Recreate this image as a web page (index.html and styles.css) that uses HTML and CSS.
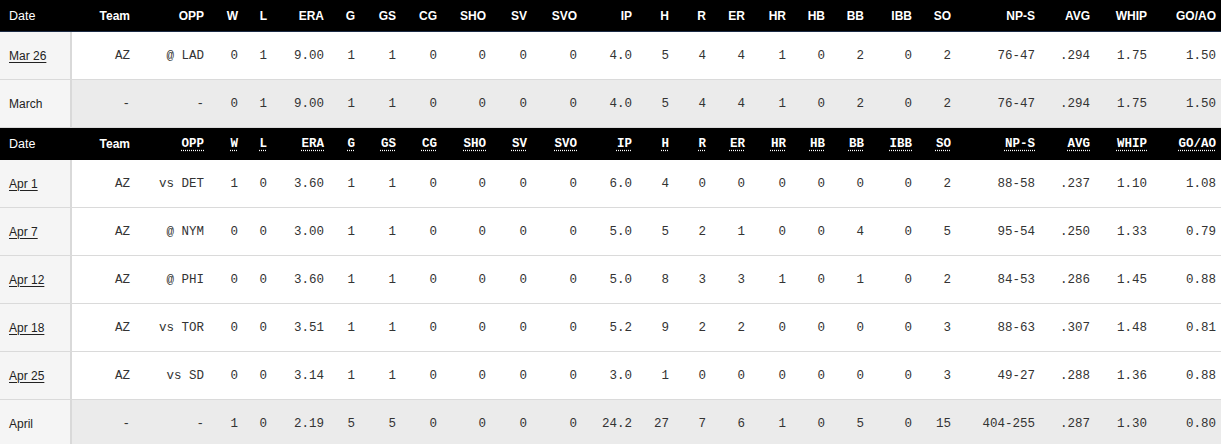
FILE: index.html
```html
<!DOCTYPE html>
<html lang="en">
<head>
<meta charset="utf-8">
<title>Game Log</title>
<link rel="stylesheet" href="styles.css">
</head>
<body>
<div class="log">
  <div class="row head head-first">
    <div class="c date">Date</div><div class="c">Team</div><div class="c">OPP</div><div class="c">W</div><div class="c">L</div><div class="c">ERA</div><div class="c">G</div><div class="c">GS</div><div class="c">CG</div><div class="c">SHO</div><div class="c">SV</div><div class="c">SVO</div><div class="c">IP</div><div class="c">H</div><div class="c">R</div><div class="c">ER</div><div class="c">HR</div><div class="c">HB</div><div class="c">BB</div><div class="c">IBB</div><div class="c">SO</div><div class="c">NP-S</div><div class="c">AVG</div><div class="c">WHIP</div><div class="c">GO/AO</div>
  </div>
  <div class="row">
    <div class="c date"><a href="#">Mar 26</a></div><div class="c">AZ</div><div class="c">@ LAD</div><div class="c">0</div><div class="c">1</div><div class="c">9.00</div><div class="c">1</div><div class="c">1</div><div class="c">0</div><div class="c">0</div><div class="c">0</div><div class="c">0</div><div class="c">4.0</div><div class="c">5</div><div class="c">4</div><div class="c">4</div><div class="c">1</div><div class="c">0</div><div class="c">2</div><div class="c">0</div><div class="c">2</div><div class="c">76-47</div><div class="c">.294</div><div class="c">1.75</div><div class="c">1.50</div>
  </div>
  <div class="row total">
    <div class="c date">March</div><div class="c">-</div><div class="c">-</div><div class="c">0</div><div class="c">1</div><div class="c">9.00</div><div class="c">1</div><div class="c">1</div><div class="c">0</div><div class="c">0</div><div class="c">0</div><div class="c">0</div><div class="c">4.0</div><div class="c">5</div><div class="c">4</div><div class="c">4</div><div class="c">1</div><div class="c">0</div><div class="c">2</div><div class="c">0</div><div class="c">2</div><div class="c">76-47</div><div class="c">.294</div><div class="c">1.75</div><div class="c">1.50</div>
  </div>
  <div class="row head head-abbr">
    <div class="c date">Date</div><div class="c team">Team</div><div class="c"><abbr>OPP</abbr></div><div class="c"><abbr>W</abbr></div><div class="c"><abbr>L</abbr></div><div class="c"><abbr>ERA</abbr></div><div class="c"><abbr>G</abbr></div><div class="c"><abbr>GS</abbr></div><div class="c"><abbr>CG</abbr></div><div class="c"><abbr>SHO</abbr></div><div class="c"><abbr>SV</abbr></div><div class="c"><abbr>SVO</abbr></div><div class="c"><abbr>IP</abbr></div><div class="c"><abbr>H</abbr></div><div class="c"><abbr>R</abbr></div><div class="c"><abbr>ER</abbr></div><div class="c"><abbr>HR</abbr></div><div class="c"><abbr>HB</abbr></div><div class="c"><abbr>BB</abbr></div><div class="c"><abbr>IBB</abbr></div><div class="c"><abbr>SO</abbr></div><div class="c"><abbr>NP-S</abbr></div><div class="c"><abbr>AVG</abbr></div><div class="c"><abbr>WHIP</abbr></div><div class="c"><abbr>GO/AO</abbr></div>
  </div>
  <div class="row">
    <div class="c date"><a href="#">Apr 1</a></div><div class="c">AZ</div><div class="c">vs DET</div><div class="c">1</div><div class="c">0</div><div class="c">3.60</div><div class="c">1</div><div class="c">1</div><div class="c">0</div><div class="c">0</div><div class="c">0</div><div class="c">0</div><div class="c">6.0</div><div class="c">4</div><div class="c">0</div><div class="c">0</div><div class="c">0</div><div class="c">0</div><div class="c">0</div><div class="c">0</div><div class="c">2</div><div class="c">88-58</div><div class="c">.237</div><div class="c">1.10</div><div class="c">1.08</div>
  </div>
  <div class="row">
    <div class="c date"><a href="#">Apr 7</a></div><div class="c">AZ</div><div class="c">@ NYM</div><div class="c">0</div><div class="c">0</div><div class="c">3.00</div><div class="c">1</div><div class="c">1</div><div class="c">0</div><div class="c">0</div><div class="c">0</div><div class="c">0</div><div class="c">5.0</div><div class="c">5</div><div class="c">2</div><div class="c">1</div><div class="c">0</div><div class="c">0</div><div class="c">4</div><div class="c">0</div><div class="c">5</div><div class="c">95-54</div><div class="c">.250</div><div class="c">1.33</div><div class="c">0.79</div>
  </div>
  <div class="row">
    <div class="c date"><a href="#">Apr 12</a></div><div class="c">AZ</div><div class="c">@ PHI</div><div class="c">0</div><div class="c">0</div><div class="c">3.60</div><div class="c">1</div><div class="c">1</div><div class="c">0</div><div class="c">0</div><div class="c">0</div><div class="c">0</div><div class="c">5.0</div><div class="c">8</div><div class="c">3</div><div class="c">3</div><div class="c">1</div><div class="c">0</div><div class="c">1</div><div class="c">0</div><div class="c">2</div><div class="c">84-53</div><div class="c">.286</div><div class="c">1.45</div><div class="c">0.88</div>
  </div>
  <div class="row">
    <div class="c date"><a href="#">Apr 18</a></div><div class="c">AZ</div><div class="c">vs TOR</div><div class="c">0</div><div class="c">0</div><div class="c">3.51</div><div class="c">1</div><div class="c">1</div><div class="c">0</div><div class="c">0</div><div class="c">0</div><div class="c">0</div><div class="c">5.2</div><div class="c">9</div><div class="c">2</div><div class="c">2</div><div class="c">0</div><div class="c">0</div><div class="c">0</div><div class="c">0</div><div class="c">3</div><div class="c">88-63</div><div class="c">.307</div><div class="c">1.48</div><div class="c">0.81</div>
  </div>
  <div class="row">
    <div class="c date"><a href="#">Apr 25</a></div><div class="c">AZ</div><div class="c">vs SD</div><div class="c">0</div><div class="c">0</div><div class="c">3.14</div><div class="c">1</div><div class="c">1</div><div class="c">0</div><div class="c">0</div><div class="c">0</div><div class="c">0</div><div class="c">3.0</div><div class="c">1</div><div class="c">0</div><div class="c">0</div><div class="c">0</div><div class="c">0</div><div class="c">0</div><div class="c">0</div><div class="c">3</div><div class="c">49-27</div><div class="c">.288</div><div class="c">1.36</div><div class="c">0.88</div>
  </div>
  <div class="row total">
    <div class="c date">April</div><div class="c">-</div><div class="c">-</div><div class="c">1</div><div class="c">0</div><div class="c">2.19</div><div class="c">5</div><div class="c">5</div><div class="c">0</div><div class="c">0</div><div class="c">0</div><div class="c">0</div><div class="c">24.2</div><div class="c">27</div><div class="c">7</div><div class="c">6</div><div class="c">1</div><div class="c">0</div><div class="c">5</div><div class="c">0</div><div class="c">15</div><div class="c">404-255</div><div class="c">.287</div><div class="c">1.30</div><div class="c">0.80</div>
  </div>
</div>
</body>
</html>
```

FILE: styles.css
```css
html, body {
  margin: 0;
  padding: 0;
  background: #ffffff;
}

.log {
  width: 1221px;
  font-family: "Liberation Mono", monospace;
  font-size: 12.5px;
  color: #333333;
}

.row {
  display: grid;
  grid-template-columns: 72px 63px 74px 34px 29px 57px 31px 41px 41px 49px 41px 50px 55px 37px 37px 39px 41px 39px 39px 48px 39px 84px 55px 57px 69px;
  height: 48px;
  border-bottom: 1px solid #dadada;
  box-sizing: border-box;
  background: #ffffff;
}

.c {
  display: flex;
  align-items: center;
  justify-content: flex-end;
  padding-right: 5px;
  white-space: nowrap;
}

.c.date {
  justify-content: flex-start;
  padding-left: 9px;
  padding-right: 0;
  background: #f5f5f5;
  border-right: 2px solid #d9d9d9;
  font-family: "Liberation Sans", Arial, sans-serif;
  font-size: 12px;
  color: #222222;
}

.c.date a {
  color: #222222;
  text-decoration: underline;
  text-underline-offset: 2px;
}

.total {
  background: #ebebeb;
}

.head {
  height: 32px;
  background: #000000;
  color: #ffffff;
  border-bottom: 0;
  font-family: "Liberation Sans", Arial, sans-serif;
  font-size: 12px;
  font-weight: bold;
}

.head .c.date {
  background: #000000;
  border-right-color: #000000;
  color: #ffffff;
  font-size: 12.5px;
  font-weight: normal;
}

.head-first {
  border-bottom: 1px solid #1c2b45;
}

.head-abbr .c {
  font-family: "Liberation Mono", monospace;
  font-size: 12.5px;
}

.head-abbr .c.date,
.head-abbr .c.team {
  font-family: "Liberation Sans", Arial, sans-serif;
}

.head-abbr .c.team {
  font-size: 12px;
}

.head-abbr abbr {
  text-decoration: underline dotted #ffffff;
  text-underline-offset: 3px;
}
```
